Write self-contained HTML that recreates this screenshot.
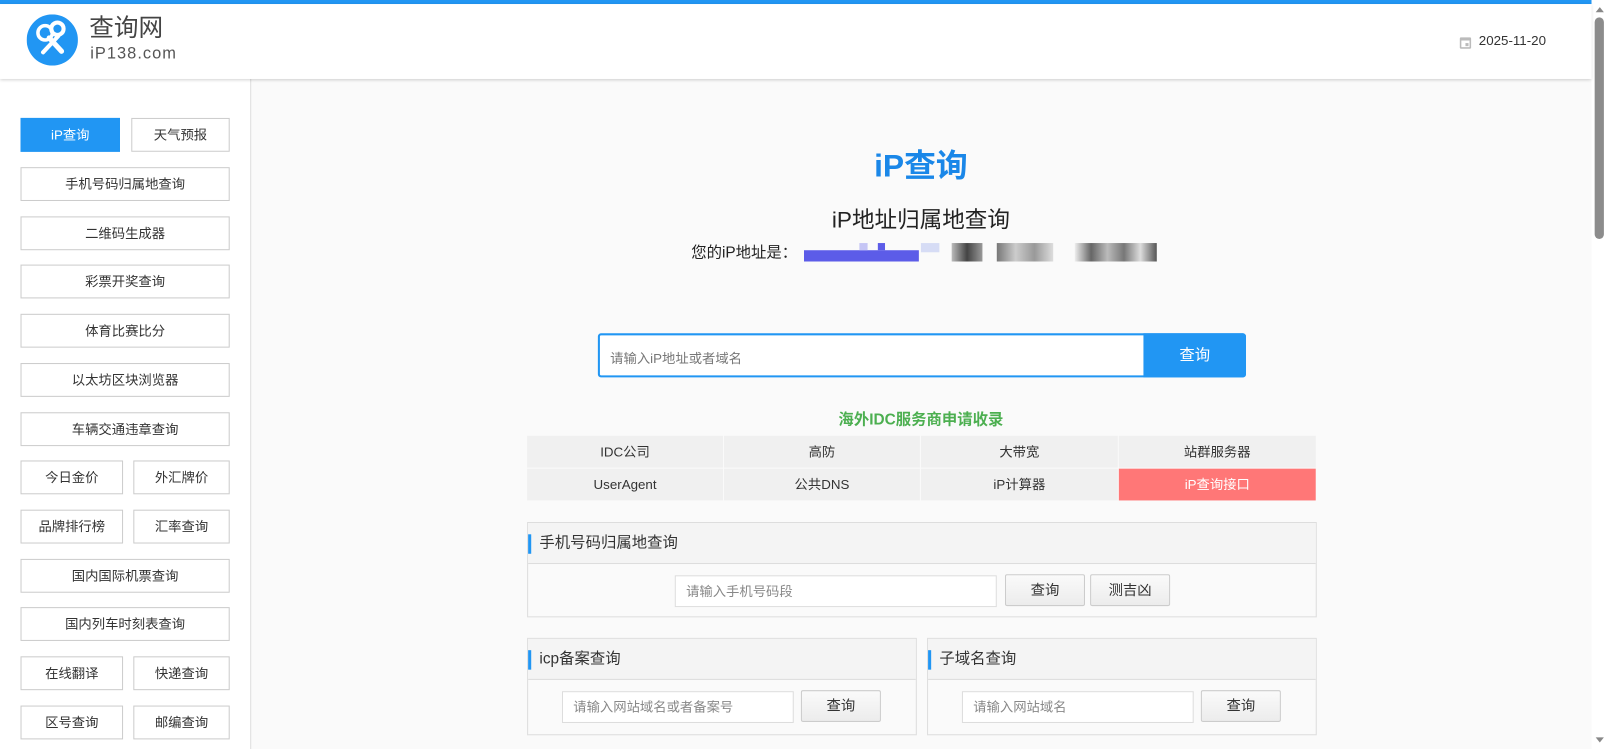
<!DOCTYPE html>
<html><head><meta charset="utf-8">
<style>
*{margin:0;padding:0;box-sizing:border-box}
html,body{width:1608px;height:749px;overflow:hidden;background:#fff}
body{font-family:"Liberation Sans","Noto Sans CJK SC",sans-serif;color:#333;position:relative}
#w{position:absolute;left:0;top:0;width:1568px;height:731px;transform:scale(1.02551);transform-origin:0 0}
.top{position:absolute;left:0;top:0;width:1552px;height:4px;background:#2196f3}
.hdr{position:absolute;left:0;top:4px;width:1552px;height:73px;background:#fff;box-shadow:0 1px 3px rgba(0,0,0,.18);z-index:2}
.main{position:absolute;left:0;top:77px;width:1552px;height:660px;background:#fafafa}
.side{position:absolute;left:0;top:77px;width:245px;height:660px;background:#fff;border-right:1px solid #ddd}
.b{position:absolute;height:33px;border:1px solid #ccc;background:#fff;font-size:13px;text-align:center;line-height:31px;color:#333}
.sb{position:absolute;left:1552px;top:0;width:16px;height:731px;background:#fff}
.c{position:absolute;text-align:center}
.cell{position:absolute;height:31px;background:#f0f0f0;font-size:13px;text-align:center;line-height:31px;color:#333}
.box{position:absolute;border:1px solid #ddd;background:#fafafa}
.box .h{height:40px;border-bottom:1px solid #ddd;background:#f4f4f4;font-size:15px;line-height:40px;padding-left:11px;position:relative}
.box .h:before{content:"";position:absolute;left:0;top:11px;width:3px;height:19px;background:#2196f3}
.in{position:absolute;height:31px;border:1px solid #ddd;background:#fff;font-size:13px;color:#888;line-height:29px;padding-left:10px}
.btn{position:absolute;height:31px;border:1px solid #ccc;border-radius:2px;background:linear-gradient(#fafafa,#ececec);font-size:14px;text-align:center;line-height:29px;color:#333}
</style></head><body><div id="w">
<div class="main"></div>
<div class="side"></div>
<div class="top"></div>
<div class="hdr">
 <svg style="position:absolute;left:26px;top:10px" width="50" height="50" viewBox="0 0 50 50">
  <circle cx="25" cy="25" r="25" fill="#2196f3"/>
  <circle cx="18" cy="18" r="7" fill="none" stroke="#fff" stroke-width="3.5"/>
  <path d="M22 23 L34 36" stroke="#fff" stroke-width="5" stroke-linecap="round"/>
  <path d="M36 14 a6 6 0 1 0 0 0.1 M31 21 L16 37" stroke="#fff" stroke-width="4" fill="none" stroke-linecap="round"/>
 </svg>
 <div style="position:absolute;left:87px;top:10px;font-size:24px;color:#444;line-height:28px">查询网</div>
 <div style="position:absolute;left:88px;top:40px;font-size:16px;color:#555;letter-spacing:1px">iP138.com</div>
 <svg style="position:absolute;left:1423px;top:31px" width="12" height="13" viewBox="0 0 12 13"><rect x="0.5" y="1.5" width="11" height="11" rx="1" fill="#bbb"/><rect x="2" y="4.5" width="8" height="6.5" fill="#fff"/><rect x="6" y="7" width="3" height="3" fill="#bbb"/></svg>
 <div style="position:absolute;left:1442px;top:28px;font-size:13px;color:#333">2025-11-20</div>
</div>
<div class="b" style="left:20px;top:115px;width:97px;background:#2196f3;border-color:#2196f3;color:#fff">iP查询</div>
<div class="b" style="left:128px;top:115px;width:96px">天气预报</div>
<div class="b" style="left:20px;top:163px;width:204px">手机号码归属地查询</div>
<div class="b" style="left:20px;top:211px;width:204px">二维码生成器</div>
<div class="b" style="left:20px;top:258px;width:204px">彩票开奖查询</div>
<div class="b" style="left:20px;top:306px;width:204px">体育比赛比分</div>
<div class="b" style="left:20px;top:354px;width:204px">以太坊区块浏览器</div>
<div class="b" style="left:20px;top:402px;width:204px">车辆交通违章查询</div>
<div class="b" style="left:20px;top:449px;width:100px">今日金价</div>
<div class="b" style="left:130px;top:449px;width:94px">外汇牌价</div>
<div class="b" style="left:20px;top:497px;width:100px">品牌排行榜</div>
<div class="b" style="left:130px;top:497px;width:94px">汇率查询</div>
<div class="b" style="left:20px;top:545px;width:204px">国内国际机票查询</div>
<div class="b" style="left:20px;top:592px;width:204px">国内列车时刻表查询</div>
<div class="b" style="left:20px;top:640px;width:100px">在线翻译</div>
<div class="b" style="left:130px;top:640px;width:94px">快递查询</div>
<div class="b" style="left:20px;top:688px;width:100px">区号查询</div>
<div class="b" style="left:130px;top:688px;width:94px">邮编查询</div>

<div class="c" style="left:798px;top:136px;width:200px;font-size:31px;font-weight:bold;color:#1a87e8">iP查询</div>
<div class="c" style="left:698px;top:197px;width:400px;font-size:22px;color:#222">iP地址归属地查询</div>
<div style="position:absolute;left:674px;top:235px;font-size:15px;color:#222">您的iP地址是：</div>
<div style="position:absolute;left:784px;top:244px;width:112px;height:11px;background:#5c5ce8"></div>
<div style="position:absolute;left:838px;top:237px;width:8px;height:7px;background:#c5c5f5"></div>
<div style="position:absolute;left:856px;top:237px;width:7px;height:7px;background:#5c5ce8"></div>
<div style="position:absolute;left:898px;top:237px;width:18px;height:9px;background:#d6dcf5"></div>
<div style="position:absolute;left:928px;top:237px;width:30px;height:18px;background:linear-gradient(90deg,#bbb,#444,#999)"></div>
<div style="position:absolute;left:972px;top:237px;width:55px;height:18px;background:linear-gradient(90deg,#777,#ccc,#999,#ddd)"></div>
<div style="position:absolute;left:1048px;top:237px;width:80px;height:18px;background:linear-gradient(90deg,#eee,#666,#bbb,#777,#ddd,#555)"></div>

<div style="position:absolute;left:583px;top:325px;width:632px;height:43px;border:2px solid #2196f3;border-radius:3px;background:#fff"></div>
<div style="position:absolute;left:595px;top:339px;font-size:13px;color:#777">请输入iP地址或者域名</div>
<div style="position:absolute;left:1115px;top:325px;width:100px;height:43px;background:#2196f3;border-radius:0 3px 3px 0;color:#fff;font-size:15px;text-align:center;line-height:43px">查询</div>

<div class="c" style="left:748px;top:398px;width:300px;font-size:15px;font-weight:bold;color:#4caf50">海外IDC服务商申请收录</div>
<div class="cell" style="left:514px;top:425px;width:191px">IDC公司</div>
<div class="cell" style="left:706px;top:425px;width:191px">高防</div>
<div class="cell" style="left:898px;top:425px;width:192px">大带宽</div>
<div class="cell" style="left:1091px;top:425px;width:192px">站群服务器</div>
<div class="cell" style="left:514px;top:457px;width:191px">UserAgent</div>
<div class="cell" style="left:706px;top:457px;width:191px">公共DNS</div>
<div class="cell" style="left:898px;top:457px;width:192px">iP计算器</div>
<div class="cell" style="left:1091px;top:457px;width:192px;background:#f77;color:#fff">iP查询接口</div>

<div class="box" style="left:514px;top:509px;width:770px;height:93px"><div class="h">手机号码归属地查询</div></div>
<div class="in" style="left:658px;top:561px;width:314px">请输入手机号码段</div>
<div class="btn" style="left:980px;top:560px;width:78px">查询</div>
<div class="btn" style="left:1063px;top:560px;width:78px">测吉凶</div>

<div class="box" style="left:514px;top:622px;width:380px;height:95px"><div class="h">icp备案查询</div></div>
<div class="in" style="left:548px;top:674px;width:226px">请输入网站域名或者备案号</div>
<div class="btn" style="left:781px;top:673px;width:78px">查询</div>
<div class="box" style="left:904px;top:622px;width:380px;height:95px"><div class="h">子域名查询</div></div>
<div class="in" style="left:938px;top:674px;width:226px">请输入网站域名</div>
<div class="btn" style="left:1171px;top:673px;width:78px">查询</div>

<div class="sb">
 <div style="position:absolute;left:4px;top:7px;width:0;height:0;border-left:4px solid transparent;border-right:4px solid transparent;border-bottom:5px solid #888"></div>
 <div style="position:absolute;left:3px;top:17px;width:9px;height:216px;background:#8c8c8c;border-radius:5px"></div>
 <div style="position:absolute;left:4px;top:719px;width:0;height:0;border-left:4px solid transparent;border-right:4px solid transparent;border-top:5px solid #888"></div>
</div>
</div></body></html>
